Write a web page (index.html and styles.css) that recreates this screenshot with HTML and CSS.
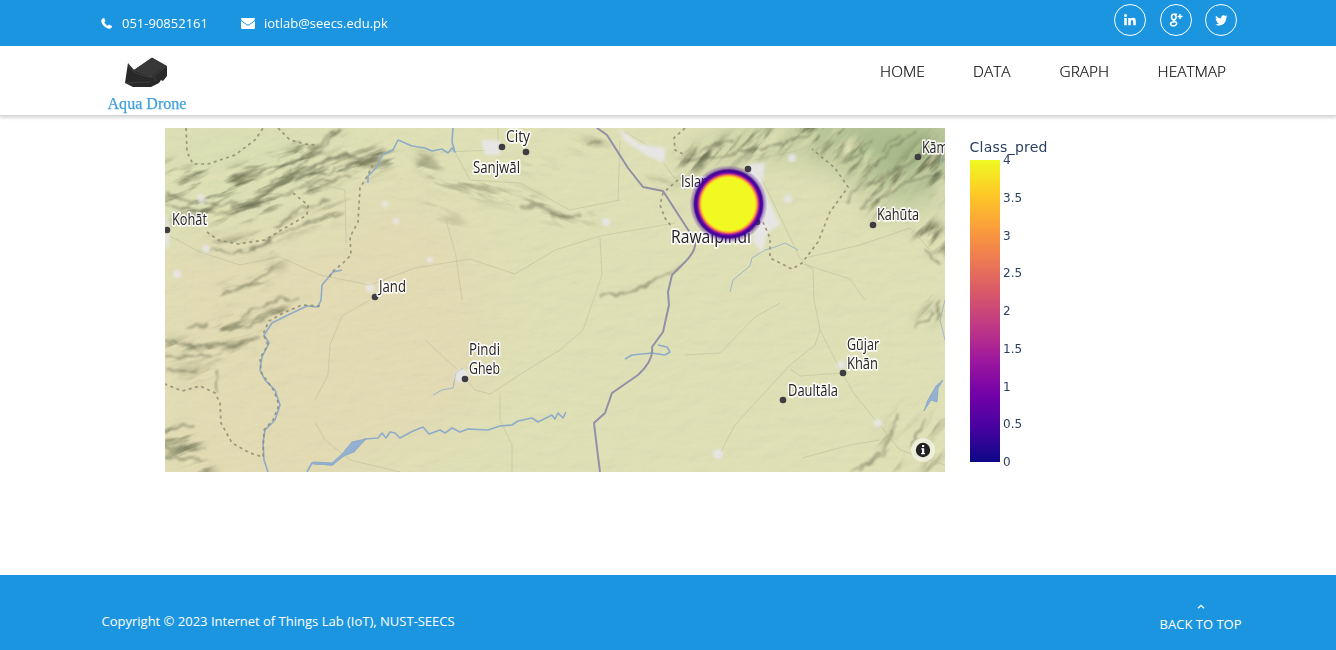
FILE: index.html
```html
<!DOCTYPE html>
<html lang="en">
<head>
<meta charset="utf-8">
<title>Aqua Drone - Heatmap</title>
<link rel="stylesheet" href="styles.css">
</head>
<body>
<div class="topbar">
  <div class="contact">
    <svg class="phone" width="11" height="11" viewBox="0 0 11 11"><path d="M2.300 0.100 L3.200 0.100 L4.500 3 L3.200 4.300 Q4.300 6.500 6.700 7.800 L8 6.600 L10.900 8 Q11 9.200 10.200 10.100 Q8.800 11.300 6.900 10.600 Q2.400 9 0.500 4.500 Q-0.500 1.300 2.300 0.100Z"/></svg>
    <span class="tel">051-90852161</span>
    <svg class="mail" width="14" height="11" viewBox="0 0 14 11"><path d="M1 0H13Q14 0 14 1.100 Q13.700 2.300 12.700 3.100 L8.200 6.200 Q7 7 5.800 6.200 L1.300 3.100 Q0.100 2.200 0 1.100 Q0 0 1 0Z"/><path d="M0 3 L5.500 6.900 Q7 7.900 8.500 6.900 L14 3V10Q14 11 13 11H1Q0 11 0 10Z"/></svg>
    <span class="email">iotlab@seecs.edu.pk</span>
  </div>
  <div class="social">
    <a class="round"><svg width="12" height="12" viewBox="0 0 12 12"><circle cx="1.500" cy="1.600" r="1.500"/><path d="M0.200 4H2.800V11.300H0.200ZM4.200 4H6.700V5Q7.500 3.800 9 3.800Q11.800 3.800 11.800 7.200V11.300H9.200V7.500Q9.200 5.900 8.100 5.900Q6.800 5.900 6.800 7.500V11.300H4.200Z"/></svg></a>
    <a class="round"><svg class="line" width="14" height="14" viewBox="0 0 14 14"><ellipse cx="4.800" cy="4" rx="2.300" ry="2.700"/><path d="M5.500 1.200H8M5.200 6.600Q3.900 7.500 5.300 8.300Q8 9.300 7.600 11Q7 12.900 4.300 12.900Q1.400 12.700 1.500 10.900Q1.700 8.900 5.600 8.800M11 1V6M8.500 3.500H13.500"/></svg></a>
    <a class="round"><svg width="13" height="11" viewBox="0 0 13 11"><path d="M12.500 1.500Q12 2.400 11.200 2.900Q11.300 6.400 8.900 8.800Q6.700 10.700 3.600 10.500Q1.700 10.400 .4 9.400Q2.500 9.500 3.900 8.400Q2.100 8.200 1.500 6.600L2.600 6.500Q.7 5.800 .6 3.800L1.700 4.100Q.1 2.700 1 .8Q3.100 3.300 6.200 3.400Q5.800 1 7.800 .3Q9.300-.1 10.400 .9L12 .3Q11.700 1.200 11 1.700Z"/></svg></a>
  </div>
</div>
<header class="header">
  <svg class="logo" width="82" height="64" viewBox="106 51 82 64">
    <path fill="#292929" d="M128 63L134 70L152 57.500L167 66V76L163 81L161 80L159 83L153 86L151 87H133L125 83L126 76Z"/>
    <path fill="#383838" d="M134 70L152 58L166 66L152 76Z"/>
    <path fill="none" stroke="#555" stroke-width=".5" d="M128 64Q131 75 152 77M126 83L150 82M134 70L153 77L167 66M155 77V81"/>
    <text x="107.500" y="108.500" textLength="79" lengthAdjust="spacingAndGlyphs" class="brand">Aqua Drone</text>
  </svg>
  <nav class="nav"><a class="home">HOME</a><a class="data">DATA</a><a class="graph">GRAPH</a><a class="heat">HEATMAP</a></nav>
</header>
<main class="main">
<svg class="map" width="780" height="344" viewBox="165 128 780 344">
  <defs>
    <filter id="blur"><feGaussianBlur stdDeviation="6"/></filter>
    <filter id="soft" x="-20%" y="-50%" width="140%" height="200%"><feGaussianBlur stdDeviation="20"/></filter>
    <filter id="town" x="-50%" y="-50%" width="200%" height="200%"><feGaussianBlur stdDeviation="1.500"/></filter>
    <filter id="rough" color-interpolation-filters="sRGB" x="-5%" y="-5%" width="110%" height="110%"><feTurbulence type="fractalNoise" baseFrequency=".08" numOctaves="2" seed="4"/><feDisplacementMap in="SourceGraphic" scale="10" xChannelSelector="R" yChannelSelector="G"/><feGaussianBlur stdDeviation=".8"/></filter>
    <filter id="dark" color-interpolation-filters="sRGB" x="0" y="0" width="1" height="1"><feTurbulence type="fractalNoise" baseFrequency=".025 .11" numOctaves="4" seed="8"/><feColorMatrix values="0 0 0 0 .4  0 0 0 0 .42  0 0 0 0 .3  4.500 0 0 0 -2.100"/></filter>
    <filter id="light" color-interpolation-filters="sRGB" x="0" y="0" width="1" height="1"><feTurbulence type="fractalNoise" baseFrequency=".025 .11" numOctaves="4" seed="21"/><feColorMatrix values="0 0 0 0 .9  0 0 0 0 .89  0 0 0 0 .72  2.500 0 0 0 -1.100"/></filter>
    <filter id="grain" x="0" y="0" width="1" height="1"><feTurbulence type="fractalNoise" baseFrequency=".04 .09" numOctaves="4" seed="3"/><feDiffuseLighting surfaceScale="2.200" lighting-color="#fff"><feDistantLight azimuth="225" elevation="55"/></feDiffuseLighting></filter>
    <mask id="west" maskUnits="userSpaceOnUse" x="165" y="128" width="780" height="344"><g filter="url(#blur)" fill="none" stroke="#fff" stroke-linecap="round">
      <path stroke-width="23" d="M160 174L225 185L290 163L330 133M165 207L235 211L290 190L340 168L385 158"/>
      <path stroke-width="12" stroke="#ccc" d="M210 247L255 243L295 225L350 209M220 295L260 282L280 255M220 329L285 307M165 347L225 351L258 337"/>
      <path stroke-width="25" stroke="#ccc" d="M165 440L190 450L200 472"/>
      <path stroke-width="12" stroke="#888" d="M370 165L430 165M170 370H217"/></g></mask>
    <mask id="mid" maskUnits="userSpaceOnUse" x="165" y="128" width="780" height="344"><g filter="url(#blur)" fill="none" stroke="#ccc" stroke-linecap="round">
      <path stroke-width="14" d="M424 158L438 178L480 190L530 200L555 216L590 215"/><path stroke-width="6" d="M425 205L460 223M575 145L605 142M525 167L550 169M650 180L690 177"/></g></mask>
    <mask id="east" maskUnits="userSpaceOnUse" x="165" y="128" width="780" height="344"><g filter="url(#blur)" fill="none" stroke="#fff" stroke-linecap="round">
      <path stroke-width="22" d="M690 160L740 148L775 140L820 128M830 130L870 165L880 200L930 150L945 190M925 230L945 245"/>
      <path stroke-width="12" stroke="#999" d="M810 140L850 170M900 470L885 440L910 410M925 320L945 285M940 420L930 472"/></g></mask>
    <radialGradient id="heat">
      <stop offset="0" stop-color="#f0f921"/><stop offset=".68" stop-color="#f0f921"/><stop offset=".705" stop-color="#fdca26"/><stop offset=".73" stop-color="#fb9f3a"/><stop offset=".755" stop-color="#d8576b"/><stop offset=".785" stop-color="#9c179e"/><stop offset=".82" stop-color="#46039f"/><stop offset=".87" stop-color="#3f0191" stop-opacity=".95"/><stop offset=".91" stop-color="#4b0b9b" stop-opacity=".45"/><stop offset="1" stop-color="#5b1ba0" stop-opacity="0"/>
    </radialGradient>
  </defs>
  <rect x="165" y="128" width="780" height="344" fill="#e0e1b7"/>
  <g filter="url(#soft)"><path fill="#e3dcb5" d="M165 245L330 240L385 190L470 225L500 330L470 420L300 500H165Z"/><path fill="#dbe0b5" d="M165 120H370L300 190L165 255Z"/><path fill="#a8bb8b" d="M690 160L760 130L850 110H960V170L900 210L845 160L770 142L700 170Z"/></g>
  <rect x="165" y="128" width="780" height="344" filter="url(#grain)" class="grain"/>
  <g mask="url(#west)"><g transform="rotate(-20 400 300)" class="relief"><rect x="0" y="0" width="900" height="650" filter="url(#dark)"/><rect x="0" y="0" width="900" height="650" filter="url(#light)"/></g></g>
  <g mask="url(#mid)"><g transform="rotate(18 500 180)" opacity=".6"><rect x="350" y="0" width="400" height="350" filter="url(#dark)"/></g></g>
  <g mask="url(#east)"><g transform="rotate(-48 820 280)" class="relief"><rect x="480" y="-50" width="650" height="650" filter="url(#dark)"/><rect x="480" y="-50" width="650" height="650" filter="url(#light)"/></g></g>
  <g class="ridges" filter="url(#rough)">
    <path d="M165 193L190 202L225 205L260 202L300 188L325 174L350 163L380 160M165 203L200 211L235 213L270 203M270 183L300 165L325 145L340 130M300 190L325 180L350 176M305 171L330 158L350 155M320 145L300 160L275 168M217 252L250 251L275 235L312 222L345 213M275 228L300 208L330 198M222 293L250 285L275 267M220 331L250 326L285 307M240 316L275 301L300 298M165 340L200 347L235 346L260 337M185 329L208 323M165 356H215M165 371H195M165 432L195 424M165 446L205 450M165 458L200 460M217 369L217 393"/>
    <path class="wide" d="M295 180L318 164L340 156L365 158M230 208L260 205M310 150L335 131M250 250L270 239M550 214L566 219L580 215M520 205L545 207"/>
    <path d="M600 296L635 291L660 279L680 265M625 293L658 281M888 450L860 470M898 416L892 438L875 458L850 472M925 420L910 445M845 205L880 160L915 130M860 210L890 175L940 145M880 150L900 135M870 185L905 165M925 250L940 265M685 163L720 155L760 148M760 150L790 140L820 130M915 328L935 312M940 300L936 322M690 158L710 147L735 140M875 202L910 180L940 174M850 160L870 140M588 147L600 142"/>
  </g>
  <g class="roads">
    <path d="M170 236L200 252L240 265L280 257L320 275L370 285L415 268L470 259L515 274L555 250L600 236L675 223M300 180L345 190L346 243M455 152L470 180L520 183L570 210L620 200M620 140L618 200M446 220L456 256L462 300M600 238L602 275L592 304L583 330L560 350L530 368L490 394L475 390L460 372L425 340M498 128V150L440 152M625 132L655 150L672 175L685 190M755 165L800 258L813 270L814 300L820 330L842 373L855 395L878 423L900 450L945 465M685 355L720 353L755 317L780 303M720 453L735 425L790 365L815 345L820 330M790 369L800 376L842 373M755 160L800 150L820 140M805 258L860 245L910 228L930 250M800 263L850 279L865 300M370 300L342 316L330 345L328 375L315 400M315 422L325 440L350 460L400 472M500 393V420L512 445V472M802 458L850 445L880 440"/>
  </g>
  <g class="streams"><path d="M730 292L733 280L750 266L752 258L765 250L775 247L785 243L798 250M433 395L442 390L453 388L456 373L463 368M945 140L940 165M945 300L940 320L945 340"/></g>
  <g class="towns" filter="url(#town)"><path d="M745 165L765 162L762 185L780 225L768 232L762 252L752 240L760 210ZM618 128L640 144L665 148L664 163L646 155L625 141ZM481 140H500V155H485ZM165 215L169 220V245L165 250ZM197 193L207 198L200 205Z"/><circle cx="792" cy="158" r="4"/><circle cx="788" cy="199" r="4"/><circle cx="385" cy="204" r="3"/><circle cx="430" cy="260" r="3"/><circle cx="396" cy="221" r="3"/><circle cx="370" cy="288" r="4"/><circle cx="462" cy="376" r="7"/><circle cx="606" cy="222" r="4"/><circle cx="878" cy="423" r="4"/><circle cx="718" cy="454" r="5"/><circle cx="206" cy="249" r="4"/><circle cx="177" cy="274" r="4"/><circle cx="841" cy="365" r="4"/></g>
  <g class="river">
    <path d="M368 183V176L377 167L382 155L393 150L398 140L412 146L425 148L432 151L442 149L448 153L452 148L455 152L452 142L453 128M342 270L333 272L322 285L321 300L318 307L307 306L288 315L272 323L264 335L269 343L262 357L260 370L265 380L275 390L280 405L275 420L265 430L263 443L264 460L268 472"/>
    <path d="M307 472L312 463L332 465L352 449L365 439L378 438L382 433L386 438L390 432L395 433L400 438L413 431L423 427L429 434L440 430L445 433L452 428L460 432L468 429L488 430L500 426L512 425L518 421L532 418L538 422L552 415L555 419L558 413L563 418L566 412M625 359L632 355L652 353L665 355L670 352L667 347L658 345"/>
    <path class="lake" d="M313 462L332 463L342 454L352 442L366 439L354 452L341 457L333 465L313 464ZM924 411L928 400L932 393L936 386L943 380L938 388L937 402L931 400Z"/>
  </g>
  <path class="highway" d="M597 128L607 135L628 168L643 187L663 191L685 225L695 240Q697 250 685 262L672 275L668 292L669 305L663 332L652 347Q654 360 638 375L612 393L605 413L594 423L596 440L600 472"/>
  <path class="border" d="M186 128L187 152L193 164L208 164L235 155L255 140L263 128M278 128L290 140L305 144L315 145M293 193L308 205L307 215L278 232L265 240L238 244L218 240L207 232M378 153L368 175L360 188L358 222L350 237L351 255L343 263L332 272L328 280M320 306L302 305L283 313L269 321L263 334L268 345L260 358L261 372L274 391L279 405L273 420L264 430L263 457L250 453L232 443L221 423L220 403L215 393L200 386L182 391L165 384M763 222L770 238V258L792 269L802 263L818 242L830 212L848 187L835 168L812 149M678 180L663 193L660 205L665 218L672 227M685 128L674 138L675 150L685 155"/>
  <g class="dots"><circle cx="167" cy="230" r="3.300"/><circle cx="375" cy="297" r="3.300"/><circle cx="502" cy="147" r="3.300"/><circle cx="526" cy="152" r="3.300"/><circle cx="748" cy="169" r="3.300"/><circle cx="757" cy="222" r="3.300"/><circle cx="873" cy="225" r="3.300"/><circle cx="918" cy="157" r="3.300"/><circle cx="465" cy="379" r="3.300"/><circle cx="843" cy="373" r="3.300"/><circle cx="783" cy="400" r="3.300"/></g>
  <g class="places">
    <text x="172" y="225" textLength="35" lengthAdjust="spacingAndGlyphs">Kohāt</text>
    <text x="379" y="292" textLength="27" lengthAdjust="spacingAndGlyphs">Jand</text>
    <text x="506" y="142" textLength="24" lengthAdjust="spacingAndGlyphs">City</text>
    <text x="473" y="173" textLength="47" lengthAdjust="spacingAndGlyphs">Sanjwāl</text>
    <text x="681" y="187" textLength="62" lengthAdjust="spacingAndGlyphs">Islamabad</text>
    <text x="671" y="243" textLength="80" lengthAdjust="spacingAndGlyphs" class="big">Rawalpindi</text>
    <text x="877" y="220" textLength="42" lengthAdjust="spacingAndGlyphs">Kahūta</text>
    <text x="922" y="153" textLength="26" lengthAdjust="spacingAndGlyphs">Kām</text>
    <text x="469" y="355" textLength="31" lengthAdjust="spacingAndGlyphs">Pindi</text>
    <text x="469" y="374" textLength="31" lengthAdjust="spacingAndGlyphs">Gheb</text>
    <text x="847" y="350" textLength="32" lengthAdjust="spacingAndGlyphs">Gūjar</text>
    <text x="847" y="368.500" textLength="31" lengthAdjust="spacingAndGlyphs">Khān</text>
    <text x="788" y="396" textLength="50" lengthAdjust="spacingAndGlyphs">Daultāla</text>
  </g>
  <circle cx="728.500" cy="204" r="39" fill="url(#heat)"/>
  <circle cx="923" cy="450" r="12" fill="#fff" fill-opacity=".5"/><circle cx="923" cy="450" r="7.200" fill="#222"/><path fill="#fff" d="M922 445H924.200V447H922ZM921.300 448.300H924.200V453H925V454.300H921V453H922V449.500H921.300Z"/>
</svg>
<svg class="scale" width="90" height="344" viewBox="965 128 90 344">
  <defs><linearGradient id="plasma" x1="0" y1="1" x2="0" y2="0"><stop offset="0" stop-color="#0d0887"/><stop offset=".111" stop-color="#46039f"/><stop offset=".222" stop-color="#7201a8"/><stop offset=".333" stop-color="#9c179e"/><stop offset=".444" stop-color="#bd3786"/><stop offset=".556" stop-color="#d8576b"/><stop offset=".667" stop-color="#ed7953"/><stop offset=".778" stop-color="#fb9f3a"/><stop offset=".889" stop-color="#fdca26"/><stop offset="1" stop-color="#f0f921"/></linearGradient></defs>
  <rect x="970" y="160" width="30" height="302" fill="url(#plasma)"/>
  <text class="scale-title" x="969.500" y="152" textLength="78">Class_pred</text>
  <text x="1003" y="164">4</text><text x="1003" y="202">3.5</text><text x="1003" y="240">3</text><text x="1003" y="277">2.5</text><text x="1003" y="315">2</text><text x="1003" y="353">1.5</text><text x="1003" y="391">1</text><text x="1003" y="428">0.5</text><text x="1003" y="466">0</text>
</svg>
</main>
<footer class="footer">
  <p class="copy">Copyright © 2023 Internet of Things Lab (IoT), NUST-SEECS</p>
  <a class="totop"><svg width="8" height="5" viewBox="0 0 8 5"><path d="M1 4.300L4 1.300L7 4.300"/></svg><span>BACK TO TOP</span></a>
</footer>
</body>
</html>
```
FILE: styles.css
```css
* { box-sizing: border-box; }
body { margin: 0; height: 650px; display: flex; flex-direction: column; overflow: hidden; background: #fff; font-family: "Open Sans", sans-serif; }
svg { display: block; flex: none; }
.topbar { height: 46px; flex: none; background: #1c95e1; display: flex; justify-content: space-between; padding: 0 99px 0 101px; color: #fff; font-size: 13px; }
.topbar svg { fill: #fff; }
.contact { display: flex; align-items: center; height: 46px; }
.tel { width: 129px; padding-left: 10px; }
.email { padding-left: 9px; }
.mail { margin-top: 1px; }
.social { display: flex; gap: 13.5px; padding-top: 4px; }
.round { width: 32px; height: 32px; border: 1px solid #fff; border-radius: 50%; display: flex; align-items: center; justify-content: center; }
.topbar .line { fill: none; stroke: #fff; stroke-width: 1.5; }
.header { height: 70px; flex: none; background: #fff; display: flex; justify-content: space-between; padding: 5px 110px 0 106px; border-bottom: 1px solid #d6d6d6; box-shadow: 0 2px 3px rgba(0,0,0,.15); }
.logo { overflow: visible; }
.brand { font: 17px "Liberation Serif", serif; fill: #3fa0dc; stroke: #3fa0dc; stroke-width: .25px; }
.nav { display: flex; padding-top: 10px; font-size: 15.4px; font-weight: 300; line-height: 22px; color: #000; -webkit-text-stroke: .2px #222; }
.home { width: 93px; }
.data { width: 86.500px; }
.graph { width: 98px; }
.main { height: 459px; flex: none; display: flex; gap: 20px; padding: 12px 0 0 165px; }
.grain { opacity: .1; mix-blend-mode: multiply; }
.relief { opacity: .85; }
.ridges { fill: none; stroke: #666a50; stroke-width: 1.9; stroke-opacity: .5; }
.wide { stroke-width: 4; stroke-opacity: .4; }
.roads { fill: none; stroke: #b9b998; stroke-width: .8; stroke-opacity: .65; stroke-linejoin: round; }
.streams { fill: none; stroke: #9db8c5; stroke-width: 1; }
.towns { fill: #e9e8ec; fill-opacity: .85; }
.river { fill: none; stroke: #8eabc9; stroke-width: 1.6; stroke-linejoin: round; }
.lake { fill: #94b1d2; stroke-width: 1; }
.highway { fill: none; stroke: #9290a6; stroke-width: 2; stroke-linejoin: round; }
.border { fill: none; stroke: #8e8b71; stroke-width: 1.7; stroke-dasharray: 3 3.500; stroke-opacity: .85; }
.dots { fill: #3d3d42; }
.places { font: 500 17px "Open Sans", sans-serif; fill: #262123; stroke: #fff; stroke-width: 3.6px; stroke-opacity: .9; paint-order: stroke; stroke-linejoin: round; }
.big { font-size: 18.5px; }
.scale { font: 12px "DejaVu Sans", sans-serif; fill: #2a3f5f; }
.scale-title { font-size: 14px; }
.footer { height: 75px; flex: none; background: #1c95e1; color: #fff; font-size: 13px; display: flex; justify-content: space-between; padding: 0 94.5px 0 101.5px; }
.copy { margin: 0; padding-top: 37px; line-height: 18px; }
.totop { display: flex; flex-direction: column; align-items: center; padding-top: 29px; line-height: 18px; }
.totop svg { fill: none; stroke: #fff; stroke-width: 1.3; margin-bottom: 6px; }
```
